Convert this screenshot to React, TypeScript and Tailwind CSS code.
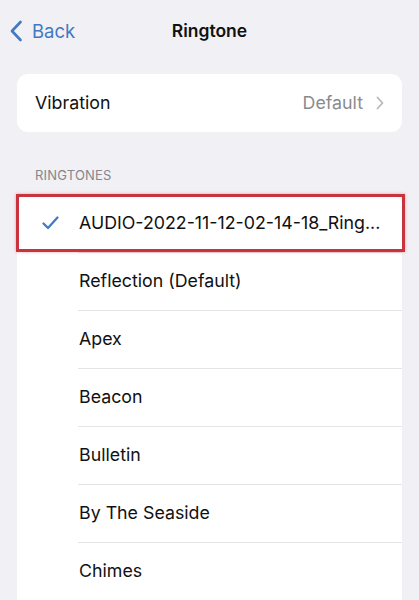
import React from "react";

const tones = [
  "Reflection (Default)",
  "Apex",
  "Beacon",
  "Bulletin",
  "By The Seaside",
  "Chimes",
];

function Check() {
  return (
    <svg width="17" height="14" viewBox="0 0 17 14" fill="none">
      <path d="M1.5 7.5 L6 12 L15.5 1.5" stroke="#3f78c4" strokeWidth="2.2" strokeLinecap="round" strokeLinejoin="round" />
    </svg>
  );
}

export default function App() {
  return (
    <div className="h-[600px] w-[419px] overflow-hidden bg-[#f0f0f5] font-['Inter','Liberation_Sans',sans-serif] text-[#111]">
      {/* nav bar */}
      <div className="relative flex h-[63px] items-center justify-center">
        <div className="absolute left-[9px] top-[20px] flex items-center gap-[9px] text-[#4179c2]">
          <svg width="14" height="22" viewBox="0 0 14 22" fill="none">
            <path d="M11.5 2 L3 11 L11.5 20" stroke="currentColor" strokeWidth="2.6" strokeLinecap="round" strokeLinejoin="round" />
          </svg>
          <span className="text-[18.5px] leading-none">Back</span>
        </div>
        <span className="text-[17.5px] font-semibold">Ringtone</span>
      </div>

      {/* vibration */}
      <div className="mx-[17px] mt-[11px] flex h-[58px] items-center justify-between rounded-[11px] bg-white pl-[18px] pr-[18px]">
        <span className="text-[17.8px]">Vibration</span>
        <div className="flex items-center gap-[13px] text-[#8a8a8e]">
          <span className="text-[17.8px]">Default</span>
          <svg width="8" height="14" viewBox="0 0 8 14" fill="none">
            <path d="M1.5 1.5 L6.5 7 L1.5 12.5" stroke="#b8b8bc" strokeWidth="1.8" strokeLinecap="round" strokeLinejoin="round" />
          </svg>
        </div>
      </div>

      {/* ringtones */}
      <div className="mt-[37px] px-[35px] text-[13px] leading-none tracking-[0.2px] text-[#86868b]">RINGTONES</div>
      <div className="mx-[17px] mt-[12px] rounded-t-[11px] bg-white">
        <div className="relative flex h-[58px] items-center">
          <div className="flex w-[62px] justify-center pl-[4px]">
            <Check />
          </div>
          <span className="text-[17.8px]">AUDIO-2022-11-12-02-14-18_Ring...</span>
          <span className="pointer-events-none absolute -left-[1px] -right-[3px] top-0 bottom-0 border-[3px] border-[#c9333d] shadow-[0_0_3px_rgba(201,51,61,0.4)]" />
        </div>
        {tones.map((t) => (
          <div key={t} className="ml-[61px] flex h-[58px] items-center border-t border-[#e4e4e8] pl-[1px]">
            <span className="text-[17.8px]">{t}</span>
          </div>
        ))}
      </div>
    </div>
  );
}
